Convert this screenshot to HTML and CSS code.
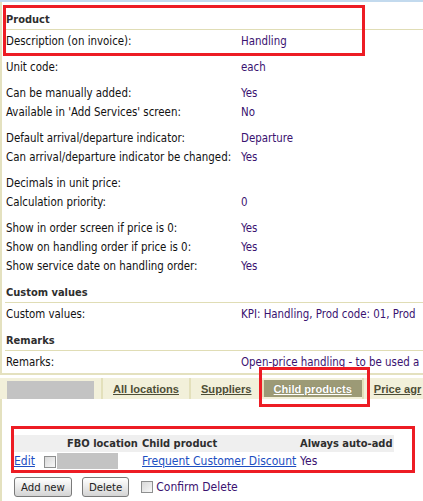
FILE: index.html
```html
<!DOCTYPE html>
<html lang="en">

<head>
  <meta charset="UTF-8" />
  <meta name="viewport" content="width=device-width, initial-scale=1.0" />
  <title>Product - Handling</title>
  <link rel="stylesheet" href="styles.css">
</head>

<body>
  <div class="topbar"></div>

  <div class="panel">
    <div class="mark mark-product"></div>

    <div class="section-head">Product</div>
    <div class="group first">
      <div class="row"><span class="label">Description (on invoice):</span><span class="value">Handling</span></div>
    </div>
    <div class="group">
      <div class="row"><span class="label">Unit code:</span><span class="value">each</span></div>
    </div>
    <div class="group">
      <div class="row"><span class="label">Can be manually added:</span><span class="value">Yes</span></div>
      <div class="row"><span class="label">Available in 'Add Services' screen:</span><span class="value">No</span></div>
    </div>
    <div class="group">
      <div class="row"><span class="label">Default arrival/departure indicator:</span><span class="value">Departure</span></div>
      <div class="row"><span class="label">Can arrival/departure indicator be changed:</span><span class="value">Yes</span></div>
    </div>
    <div class="group">
      <div class="row"><span class="label">Decimals in unit price:</span><span class="value"></span></div>
      <div class="row"><span class="label">Calculation priority:</span><span class="value">0</span></div>
    </div>
    <div class="group">
      <div class="row"><span class="label">Show in order screen if price is 0:</span><span class="value">Yes</span></div>
      <div class="row"><span class="label">Show on handling order if price is 0:</span><span class="value">Yes</span></div>
      <div class="row"><span class="label">Show service date on handling order:</span><span class="value">Yes</span></div>
    </div>

    <div class="section-head">Custom values</div>
    <div class="group first">
      <div class="row"><span class="label">Custom values:</span><span class="value">KPI: Handling, Prod code: 01, Prod</span></div>
    </div>

    <div class="section-head">Remarks</div>
    <div class="group first">
      <div class="row"><span class="label">Remarks:</span><span class="value">Open-price handling - to be used a</span></div>
    </div>
  </div>

  <div class="tabs">
    <div class="tab-blank"><span class="redacted"></span></div>
    <a class="tab" href="#">All locations</a>
    <a class="tab" href="#">Suppliers</a>
    <a class="tab active" href="#">Child products<span class="mark mark-tab"></span></a>
    <a class="tab" href="#">Price agr</a>
  </div>

  <div class="lower">
    <div class="mark-table">
      <table class="child-table">
        <tr>
          <th class="c-edit"></th>
          <th class="c-check"></th>
          <th class="c-fbo">FBO location</th>
          <th class="c-child">Child product</th>
          <th class="c-auto">Always auto-add</th>
        </tr>
        <tr>
          <td class="c-edit"><a href="#">Edit</a></td>
          <td class="c-check"><input type="checkbox"></td>
          <td class="c-fbo"><span class="redacted small"></span></td>
          <td class="c-child"><a href="#">Frequent Customer Discount</a></td>
          <td class="c-auto">Yes</td>
        </tr>
      </table>
    </div>

    <div class="actions">
      <button type="button">Add new</button>
      <button type="button">Delete</button>
      <label class="confirm"><input type="checkbox"> Confirm Delete</label>
    </div>
  </div>
</body>

</html>
```

FILE: styles.css
```css
html,
body {
  overflow: hidden;
}

body {
  margin: 0;
  font-family: "DejaVu Sans Condensed", "Liberation Sans", sans-serif;
  font-size: 11px;
  color: #111;
  background: #fff;
}

* {
  box-sizing: border-box;
}

.topbar {
  height: 2px;
  background: #c3daee;
}

/* Detail panel */
.panel {
  position: relative;
  border-left: 2px solid #e4e1bf;
  border-bottom: 2px solid #e4e1bf;
  padding: 1px 0 1px 3px;
}

.section-head {
  margin-top: 7px;
  padding-left: 1px;
  line-height: 19px;
  font-weight: bold;
  color: #2e2e2e;
  border-bottom: 1px solid #e0ddb5;
  white-space: nowrap;
}

.group {
  margin-top: 7px;
}

.group.first {
  margin-top: 2px;
}

.row {
  display: flex;
  font-size: 11.4px;
  line-height: 19px;
  padding-left: 1px;
  white-space: nowrap;
}

.label {
  flex: 0 0 235px;
}

.value {
  color: #3a1270;
}

/* Red annotation boxes */
.mark {
  position: absolute;
  border: 3px solid #ed1c24;
  pointer-events: none;
}

.mark-product {
  left: 1px;
  top: 3px;
  width: 362px;
  height: 51px;
}

.mark-tab {
  left: -5px;
  right: -8px;
  top: -13px;
  bottom: -10px;
}

/* Tab strip */
.tabs {
  display: flex;
  margin-top: 3px;
  height: 21px;
  background: #f2f0da;
  white-space: nowrap;
}

.tab-blank {
  padding: 3px 7px 0 7px;
}

.redacted {
  display: block;
  width: 87px;
  height: 18px;
  background: #c3c3c3;
}

.tab {
  position: relative;
  display: flex;
  align-items: center;
  padding: 0 10px;
  border-left: 2px solid #e3e0bb;
  font-family: "Liberation Sans", Arial, sans-serif;
  font-size: 11.1px;
  font-weight: bold;
  color: #4e4e36;
  text-decoration: underline;
}

.tab.active {
  margin: 2px 0;
  background: #9c9a76;
  color: #fff;
  text-shadow: 0 0 1px #6d6b4c;
}

/* Child product list */
.lower {
  border-left: 2px solid #e4e1bf;
  padding: 27px 0 10px 9px;
  font-size: 12px;
}

.mark-table {
  width: 404px;
  padding-top: 6px;
  border: 3px solid #ed1c24;
}

.child-table {
  border-collapse: collapse;
  table-layout: fixed;
  width: 380px;
}

.child-table th {
  height: 17px;
  padding: 0 3px;
  background: #efefef;
  color: #2e2e2e;
  font-size: 11px;
  text-align: left;
  white-space: nowrap;
}

.child-table td {
  height: 18px;
  padding: 0 3px;
  color: #3a1270;
  white-space: nowrap;
}

.child-table a {
  color: #1c4ec2;
}

.child-table .c-edit {
  width: 30px;
  padding: 0;
}

.child-table .c-check {
  width: 13px;
  padding: 0;
}

.child-table .c-fbo {
  width: 82px;
}

.child-table th.c-fbo {
  padding-left: 10px;
}

.child-table td.c-fbo {
  padding: 0;
}

.child-table .c-child {
  width: 158px;
}

.child-table .c-auto {
  width: 97px;
}

.redacted.small {
  width: 61px;
  height: 16px;
}

input[type=checkbox] {
  appearance: none;
  width: 12px;
  height: 12px;
  margin: 0;
  vertical-align: middle;
  border: 1px solid #8e8f8f;
  background: linear-gradient(135deg, #d8d8d8, #f8f8f8);
}

/* Buttons below the list */
.actions {
  display: flex;
  align-items: center;
  margin-top: 4px;
  padding-left: 3px;
}

.actions button {
  height: 20px;
  margin-right: 10px;
  padding: 0 6px;
  font-family: inherit;
  font-size: 11.3px;
  color: #222;
  border: 1px solid #7a7a7a;
  border-radius: 3px;
  background: linear-gradient(#ffffff, #e6e6e6 60%, #d4d4d4);
}

.actions button + button {
  margin-right: 12px;
}

.confirm {
  display: flex;
  align-items: center;
  gap: 3px;
  color: #3a1270;
}
```
